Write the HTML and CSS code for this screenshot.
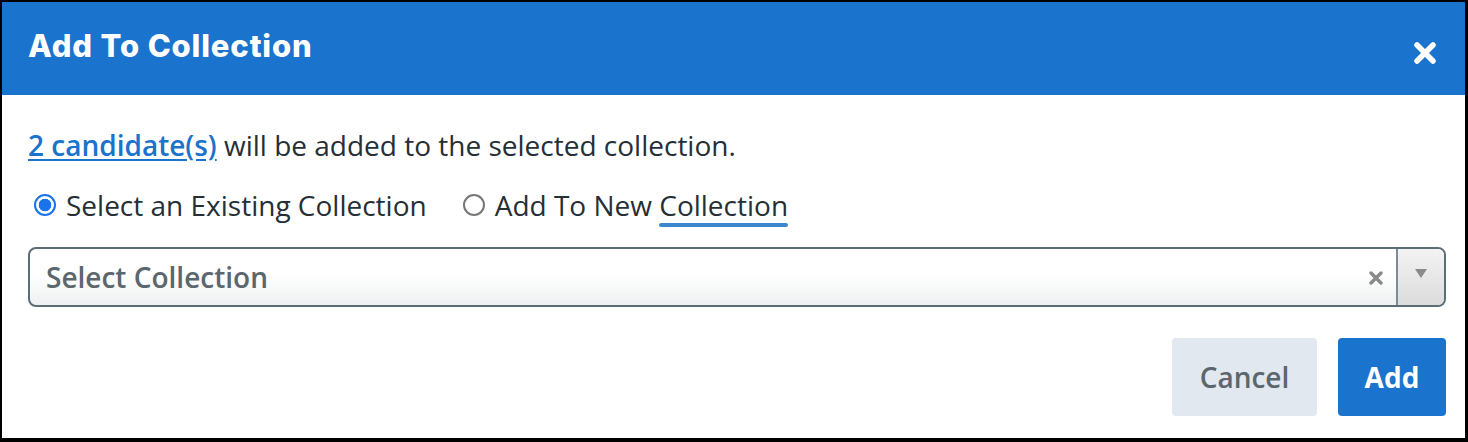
FILE: index.html
```html
<!DOCTYPE html>
<html lang="en">
<head>
  <meta charset="UTF-8">
  <title>Add To Collection</title>
  <link rel="stylesheet" href="styles.css">
</head>
<body>
  <div class="modal">
    <div class="modal-header">
      <h1>Add To Collection</h1>
      <button class="close" aria-label="Close">
        <svg width="24" height="24" viewBox="0 0 24 24">
          <path d="M4 4 L20 20 M20 4 L4 20" stroke="#fff" stroke-width="5.5" stroke-linecap="round"/>
        </svg>
      </button>
    </div>

    <div class="modal-body">
      <p class="info"><a href="#">2 candidate(s)</a> will be added to the selected collection.</p>

      <div class="choices">
        <label class="radio checked"><span class="dot"></span><span>Select an Existing Collection</span></label>
        <label class="radio"><span class="dot"></span><span>Add To New <span class="squiggle">Collection</span></span></label>
      </div>

      <div class="select">
        <span class="placeholder">Select Collection</span>
        <span class="clear">
          <svg width="14" height="14" viewBox="0 0 14 14">
            <path d="M2 2 L12 12 M12 2 L2 12" stroke="#8a8a8a" stroke-width="3.4" stroke-linecap="round"/>
          </svg>
        </span>
        <span class="arrow"><span class="tri"></span></span>
      </div>

      <div class="actions">
        <button class="btn cancel">Cancel</button>
        <button class="btn add">Add</button>
      </div>
    </div>
  </div>
</body>
</html>
```

FILE: styles.css
```css
body {
  margin: 0;
  background: #fff;
  font-family: "Open Sans", sans-serif;
}
.modal {
  width: 1468px;
  height: 442px;
  box-sizing: border-box;
  border-style: solid;
  border-color: #000;
  border-width: 2px 3px 4px 2px;
  background: #fff;
}
.modal-header {
  height: 93px;
  background-color: #1a73cc;
  display: flex;
  align-items: center;
  justify-content: space-between;
  padding: 0 28px 0 26px;
}
.modal-header h1 {
  margin: 0;
  color: #fff;
  font-family: "Inter", sans-serif;
  font-weight: 800;
  font-size: 31px;
  letter-spacing: 0.85px;
  padding-bottom: 6px;
}
.close {
  background: none;
  border: none;
  padding: 0;
  margin-top: 8px;
  display: flex;
}
.modal-body {
  padding: 33px 19px 0 26px;
}
.info {
  margin: 0;
  font-size: 28px;
  line-height: 34px;
  color: #262f35;
}
.info a {
  color: #1a73cc;
  font-weight: 600;
  text-underline-offset: 3px;
}
.choices {
  display: flex;
  gap: 36px;
  margin-top: 26px;
  height: 34px;
  align-items: center;
  padding-left: 6px;
}
.radio {
  display: flex;
  align-items: center;
  font-size: 28px;
  color: #262f35;
}
.dot {
  width: 22px;
  height: 22px;
  border: 2px solid #777;
  border-radius: 50%;
  margin-right: 10px;
  box-sizing: border-box;
}
.radio.checked .dot {
  border: 2px solid #1a73e8;
  background: radial-gradient(circle, #1a73e8 0 6px, #fff 6.6px);
}
.squiggle {
  position: relative;
}
.squiggle::after {
  content: "";
  position: absolute;
  left: 0;
  right: 0;
  bottom: -3px;
  height: 4px;
  border-radius: 2px;
  background: #3b88cf;
}
.select {
  margin-top: 25px;
  height: 60px;
  box-sizing: border-box;
  border: 2px solid #5d6d77;
  border-radius: 8px;
  background: linear-gradient(#fff 45%, #eef0f1);
  display: flex;
  align-items: stretch;
  overflow: hidden;
}
.placeholder {
  flex: 1;
  display: flex;
  align-items: center;
  padding-left: 16px;
  font-size: 28px;
  font-weight: 600;
  color: #5b666d;
}
.clear {
  display: flex;
  align-items: center;
  padding: 0 13px;
  padding-top: 2px;
}
.arrow {
  width: 48px;
  border-left: 2px solid #7d8c94;
  background: linear-gradient(#f3f3f3, #dcdcdc);
  display: flex;
  justify-content: center;
  padding-top: 20px;
  box-sizing: border-box;
}
.tri {
  width: 0;
  height: 0;
  border-left: 6px solid transparent;
  border-right: 6px solid transparent;
  border-top: 9px solid #8a8a8a;
}
.actions {
  display: flex;
  justify-content: flex-end;
  gap: 21px;
  margin-top: 31px;
}
.btn {
  height: 78px;
  border: none;
  border-radius: 4px;
  font-family: "Open Sans", sans-serif;
  font-size: 28px;
  font-weight: 600;
  padding: 0;
}
.cancel {
  width: 145px;
  background-color: #e2e8f0;
  color: #5b666d;
}
.add {
  width: 108px;
  background-color: #1a73cc;
  color: #fff;
  font-weight: 700;
}
```
